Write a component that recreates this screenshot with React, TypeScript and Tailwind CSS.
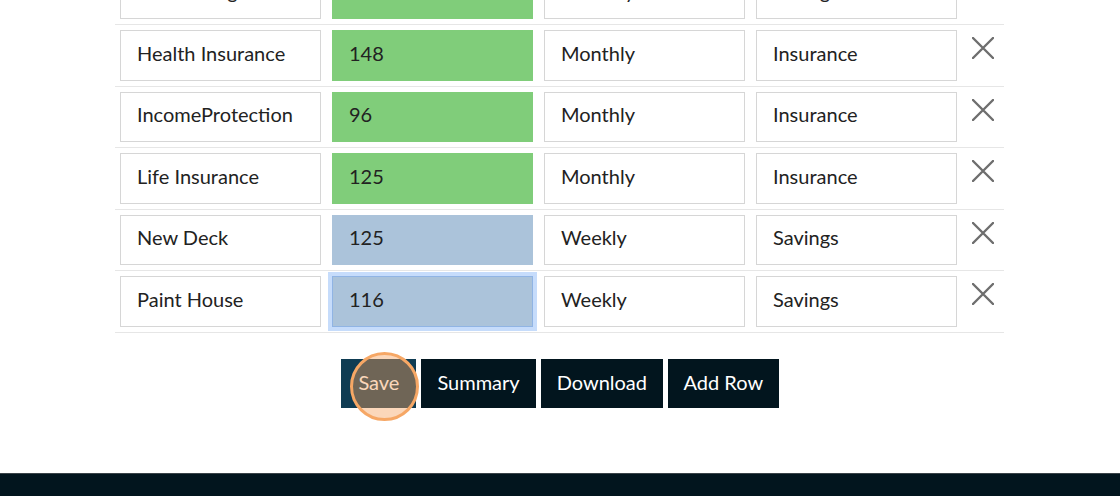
import React from 'react';

type Row = {
  name: string;
  amount: string;
  freq: string;
  category: string;
  tone: 'green' | 'blue';
  focused?: boolean;
};

const rows: Row[] = [
  { name: 'Car Parking', amount: '200', freq: 'Monthly', category: 'Savings', tone: 'green' },
  { name: 'Health Insurance', amount: '148', freq: 'Monthly', category: 'Insurance', tone: 'green' },
  { name: 'IncomeProtection', amount: '96', freq: 'Monthly', category: 'Insurance', tone: 'green' },
  { name: 'Life Insurance', amount: '125', freq: 'Monthly', category: 'Insurance', tone: 'green' },
  { name: 'New Deck', amount: '125', freq: 'Weekly', category: 'Savings', tone: 'blue' },
  { name: 'Paint House', amount: '116', freq: 'Weekly', category: 'Savings', tone: 'blue', focused: true },
];

function Field({ value, className = '' }: { value: string; className?: string }) {
  return (
    <div
      className={`flex h-[50.5px] w-[201px] items-center border pb-[5px] pl-4 text-[20px] text-[#222] ${className}`}
    >
      {value}
    </div>
  );
}

function CloseIcon() {
  return (
    <svg width="22" height="22" viewBox="0 0 22 22" className="text-[#6e6e6e]">
      <path d="M1 1 L21 21 M21 1 L1 21" stroke="currentColor" strokeWidth="2.4" strokeLinecap="round" />
    </svg>
  );
}

function TableRow({ row }: { row: Row }) {
  const amountTone =
    row.tone === 'green'
      ? 'bg-[#80cd7a] border-[#80cd7a]'
      : row.focused
        ? 'bg-[#abc3da] border-[#90b4e4] ring-4 ring-[#c6dcfb]'
        : 'bg-[#abc3da] border-[#abc3da]';

  return (
    <div className="flex border-b border-[#e6e6e6] py-[5px]">
      <div className="w-[212px] pl-[5px]">
        <Field value={row.name} className="border-[#d6d6d6] bg-white" />
      </div>
      <div className="w-[212px] pl-[5px]">
        <Field value={row.amount} className={amountTone} />
      </div>
      <div className="w-[212px] pl-[5px]">
        <Field value={row.freq} className="border-[#d6d6d6] bg-white" />
      </div>
      <div className="w-[212px] pl-[5px]">
        <Field value={row.category} className="border-[#d6d6d6] bg-white" />
      </div>
      <div className="flex flex-1 justify-center pr-[2px] pt-[7px]">
        <CloseIcon />
      </div>
    </div>
  );
}

export default function App() {
  return (
    <div className="flex h-[496px] w-[1120px] flex-col overflow-hidden bg-white font-['Lato',sans-serif]">
      <div className="ml-[115px] mt-[-36.5px] w-[889px]">
        {rows.map((row) => (
          <TableRow key={row.name} row={row} />
        ))}
      </div>

      <div className="mt-[26px] flex justify-center gap-[5px]">
        <button className="relative h-[49px] bg-[#0f3c53] px-[17px] pb-[3px] text-[20px] text-white">
          Save
          <span className="pointer-events-none absolute left-[9px] top-[-7px] h-[69px] w-[69px] rounded-full border-[3px] border-[#f6a765] bg-[rgba(245,160,90,0.42)]" />
        </button>
        <button className="h-[49px] bg-[#02151e] px-[16px] pb-[3px] text-[20px] text-white">Summary</button>
        <button className="h-[49px] bg-[#02151e] px-[16px] pb-[3px] text-[20px] text-white">Download</button>
        <button className="h-[49px] bg-[#02151e] px-[15.5px] pb-[3px] text-[20px] text-white">Add Row</button>
      </div>

      <div className="mt-auto h-[23px] border-t border-[#3a4348] bg-[#02151e]" />
    </div>
  );
}
